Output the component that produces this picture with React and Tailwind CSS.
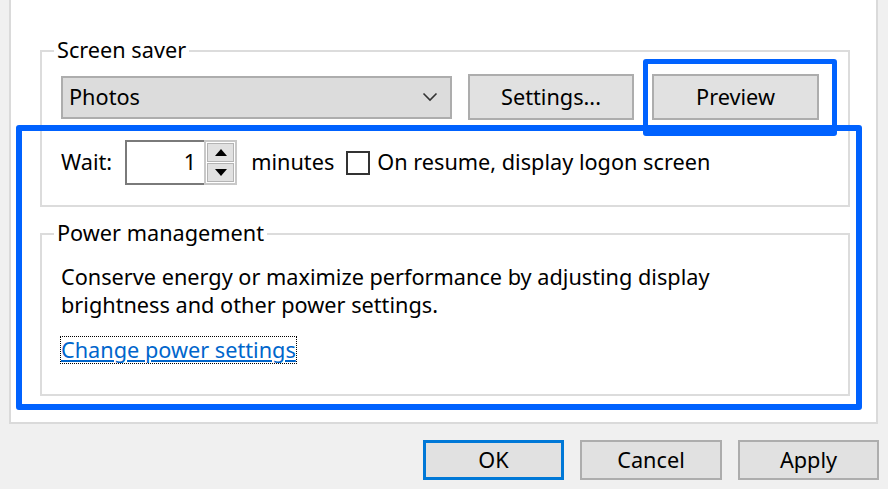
import React from "react";

const Btn = ({ children, className = "" }) => (
  <div
    className={
      "flex items-center justify-center bg-[#e1e1e1] border-2 " +
      className
    }
  >
    {children}
  </div>
);

const GroupLabel = ({ children }) => (
  <div className="-mt-[16px] ml-[12px] px-[3px] w-fit bg-white leading-[28px]">
    {children}
  </div>
);

const App = () => {
  return (
    <div className="relative w-[888px] h-[489px] overflow-hidden bg-[#f0f0f0] text-[21.7px] text-black font-['Noto_Sans',sans-serif]">
      {/* Dialog page */}
      <div className="ml-[9px] w-[869px] h-[424px] bg-white border-x-2 border-b-2 border-[#dadada] pt-[50px] pl-[29px]">
        {/* Screen saver group */}
        <div className="w-[810px] border-2 border-[#dcdcdc] pb-[20px]">
          <GroupLabel>Screen saver</GroupLabel>
          <div className="mt-[10px] pl-[19px] h-[46px] flex items-center">
            <div className="w-[391px] h-[43px] bg-[#dcdcdc] border-2 border-[#adadad] flex items-center justify-between pl-[6px] pr-[12px]">
              <span>Photos</span>
              <svg width="16" height="10" viewBox="0 0 16 10" fill="none">
                <path d="M1.5 1.5 L8 8 L14.5 1.5" stroke="#333" strokeWidth="1.6" />
              </svg>
            </div>
            <Btn className="ml-[16px] w-[166px] h-[46px] border-[#adadad]">Settings...</Btn>
            <Btn className="ml-[18px] w-[167px] h-[46px] border-[#adadad]">Preview</Btn>
          </div>
          <div className="mt-[20px] pl-[19px] h-[45px] flex items-center">
            <span>Wait:</span>
            <div className="ml-[13px] flex h-[45px]">
              <div className="w-[79px] h-full border-2 border-r-0 border-[#7a7a7a] flex items-center justify-end pr-[8px]">
                1
              </div>
              <div className="w-[33px] h-full border-2 border-[#c8c8c8] flex flex-col gap-[1px] p-[1px]">
                <div className="flex-1 bg-[#e1e1e1] border border-[#b4b4b4] flex items-center justify-center">
                  <svg width="12" height="7" viewBox="0 0 12 7">
                    <path d="M6 0 L12 7 L0 7 Z" fill="#000" />
                  </svg>
                </div>
                <div className="flex-1 bg-[#e1e1e1] border border-[#b4b4b4] flex items-center justify-center">
                  <svg width="12" height="7" viewBox="0 0 12 7">
                    <path d="M0 0 L12 0 L6 7 Z" fill="#000" />
                  </svg>
                </div>
              </div>
            </div>
            <span className="ml-[14px]">minutes</span>
            <div className="ml-[12px] w-[24px] h-[24px] border-2 border-[#333] bg-white"></div>
            <span className="ml-[7px]">On resume, display logon screen</span>
          </div>
        </div>

        {/* Power management group */}
        <div className="mt-[26px] w-[810px] border-2 border-[#dcdcdc] pb-[30px]">
          <GroupLabel>Power management</GroupLabel>
          <div className="mt-[16px] pl-[19px] leading-[28px]">
            <p>Conserve energy or maximize performance by adjusting display</p>
            <p>brightness and other power settings.</p>
          </div>
          <div className="mt-[17px] ml-[18px] w-fit border border-dotted border-black leading-[26px]">
            <a href="#" className="text-[#0066cc] underline">
              Change power settings
            </a>
          </div>
        </div>
      </div>

      {/* Dialog buttons */}
      <div className="mt-[16px] ml-[423px] flex gap-[16px]">
        <Btn className="w-[141px] h-[40px] border-[#0078d7] outline outline-1 outline-[#0078d7] -outline-offset-[3px]">OK</Btn>
        <Btn className="w-[142px] h-[40px] border-[#adadad]">Cancel</Btn>
        <Btn className="w-[141px] h-[40px] border-[#adadad]">Apply</Btn>
      </div>

      {/* Blue annotation highlights */}
      <div className="absolute left-[643px] top-[59px] w-[194px] h-[77px] border-[5px] border-[#0062ff] rounded-[3px]"></div>
      <div className="absolute left-[16px] top-[125px] w-[846px] h-[285px] border-[6px] border-[#0062ff] rounded-[3px]"></div>
    </div>
  );
};

export default App;
